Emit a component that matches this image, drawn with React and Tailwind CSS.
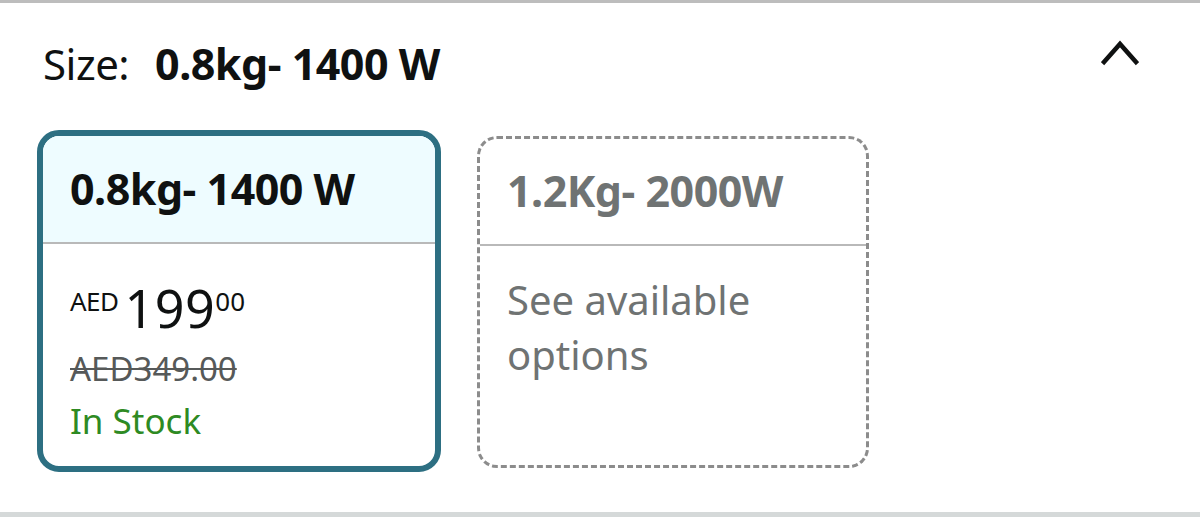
export default function App() {
  const font = { fontFamily: '"Noto Sans", "Open Sans", Arial, sans-serif' };
  return (
    <div className="w-[1200px] h-[521px] bg-white overflow-hidden flex flex-col" style={font}>
      <div className="h-[3px] bg-[#bdbdbd]" />
      <div className="flex-1 flex flex-col px-[37px]">
        <div className="flex items-center justify-between h-[127px] pb-[6px]">
          <div className="flex items-baseline pl-[6px] text-[#0f1111]">
            <span className="text-[42px] leading-none tracking-[-0.5px]">Size:</span>
            <span className="text-[43px] leading-none font-bold ml-[26px] tracking-[-0.5px]">0.8kg- 1400 W</span>
          </div>
          <svg width="38" height="26" viewBox="0 0 38 26" className="mr-[24px] mb-[22px]" fill="none">
            <path d="M3 22 L19 4 L35 22" stroke="#0f1111" strokeWidth="4.5" strokeLinecap="square" strokeLinejoin="miter" />
          </svg>
        </div>
        <div className="flex items-start gap-[36px]">
          <div className="w-[404px] h-[342px] border-[6px] border-[#2d6f82] rounded-[22px] overflow-hidden flex flex-col">
            <div className="h-[108px] bg-[#eefcff] flex items-center pl-[27px] pb-[2px] border-b-[2px] border-[#b9b9b9]">
              <span className="text-[43px] font-bold text-[#0f1111] leading-none tracking-[-0.5px]">0.8kg- 1400 W</span>
            </div>
            <div className="flex flex-col pl-[27px] pt-[40px]">
              <div className="flex items-start text-[#0f1111] leading-none">
                <span className="text-[26px] mt-[4px] tracking-[-0.5px]">AED</span>
                <span className="text-[52px] ml-[6px] tracking-[0.5px] -mt-[2px]">199</span>
                <span className="text-[26px] mt-[4px]">00</span>
              </div>
              <span className="text-[33px] text-[#565959] line-through leading-none mt-[18px] decoration-[2px]">AED349.00</span>
              <span className="text-[35px] text-[#2e8a23] leading-none mt-[18px]">In Stock</span>
            </div>
          </div>
          <div className="w-[392px] h-[332px] mt-[6px] border-[3px] border-dashed border-[#8c8c8c] rounded-[20px] flex flex-col">
            <div className="h-[107px] flex items-center pl-[27px] pb-[2px] border-b-[2px] border-[#b9b9b9]">
              <span className="text-[43px] font-bold text-[#6f7373] leading-none tracking-[-0.5px]">1.2Kg- 2000W</span>
            </div>
            <div className="pl-[27px] pt-[26px] pr-[20px]">
              <p className="text-[40px] text-[#6f7373] leading-[55px]">See available options</p>
            </div>
          </div>
        </div>
      </div>
      <div className="h-[5px] bg-[#d5d9d9] mb-[4px]" />
    </div>
  );
}
